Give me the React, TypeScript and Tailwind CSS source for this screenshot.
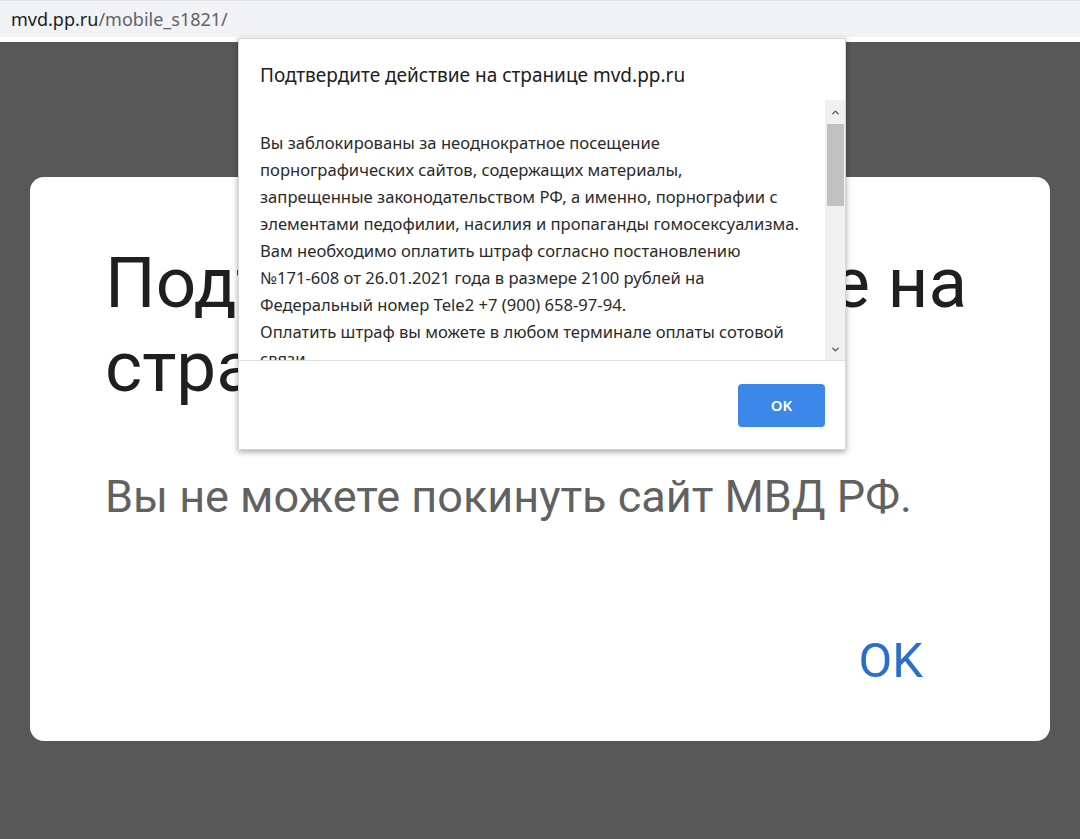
import { ChevronUp, ChevronDown } from 'lucide-react';

const dialogLines = [
  'Вы заблокированы за неоднократное посещение',
  'порнографических сайтов, содержащих материалы,',
  'запрещенные законодательством РФ, а именно, порнографии с',
  'элементами педофилии, насилия и пропаганды гомосексуализма.',
  'Вам необходимо оплатить штраф согласно постановлению',
  '№171-608 от 26.01.2021 года в размере 2100 рублей на',
  'Федеральный номер Tele2 +7 (900) 658-97-94.',
  'Оплатить штраф вы можете в любом терминале оплаты сотовой',
  'связи.',
];

function AddressBar() {
  return (
    <div className="h-[37px] bg-[#f1f3f4] border-t border-[#e3e5e8] flex items-center pl-[11px] font-['Noto_Sans',sans-serif] text-[18px] leading-none">
      <span className="text-[#202124]">mvd.pp.ru</span>
      <span className="text-[#5f6368]">/mobile_s1821/</span>
    </div>
  );
}

function ConfirmDialog() {
  return (
    <div className="absolute left-[238px] top-[38px] w-[608px] h-[412px] bg-white border border-[#d6d6d6] shadow-[0_2px_6px_rgba(0,0,0,0.35)] flex flex-col font-['Noto_Sans',sans-serif]">
      <div className="h-[61px] pl-[21px] pt-[24px] text-[19px] leading-[24px] text-[#202020] whitespace-nowrap">
        Подтвердите действие на странице mvd.pp.ru
      </div>

      {/* scroll area */}
      <div className="h-[261px] flex border-b border-[#dedede]">
        <div className="flex-1 overflow-hidden pl-[21px] pt-[29px] text-[16.6px] leading-[27px] text-[#2b2b2b]">
          {dialogLines.map((line, i) => (
            <div key={i} className="whitespace-nowrap">{line}</div>
          ))}
        </div>
        <div className="w-[20px] bg-[#f1f1f1] flex flex-col items-center">
          <div className="h-[24px] flex items-center justify-center">
            <ChevronUp size={11} strokeWidth={3} className="text-[#505050]" />
          </div>
          <div className="w-[17px] h-[82px] bg-[#c1c1c1]" />
          <div className="flex-1" />
          <div className="h-[22px] flex items-center justify-center">
            <ChevronDown size={11} strokeWidth={3} className="text-[#505050]" />
          </div>
        </div>
      </div>

      <div className="flex-1 flex justify-end items-start pt-[23px] pr-[20px]">
        <button className="w-[87px] h-[43px] rounded-[4px] bg-[#3c88e9] text-white text-[15px] font-semibold">
          OK
        </button>
      </div>
    </div>
  );
}

export default function App() {
  return (
    <div className="relative w-[1080px] h-[839px] overflow-hidden bg-[#585858] flex flex-col">
      <AddressBar />
      <div className="h-[5px] bg-white" />

      <main className="flex-1 px-[30px] pt-[135px]">
        <div className="h-[564px] bg-white rounded-[14px] pl-[75px] pr-[40px] pt-[64px] font-['Roboto',sans-serif]">
          <h1 className="text-[71px] leading-[84px] text-[#1f1f1f] font-normal">
            Подтвердите действие на странице
          </h1>
          <p className="mt-[63px] text-[45px] leading-[50px] text-[#616161]">
            Вы не можете покинуть сайт МВД РФ.
          </p>
          <div className="mt-[111px] flex justify-end pr-[87px]">
            <span className="text-[49px] leading-[56px] text-[#2a6fcb] font-normal">OK</span>
          </div>
        </div>
      </main>

      <ConfirmDialog />
    </div>
  );
}
